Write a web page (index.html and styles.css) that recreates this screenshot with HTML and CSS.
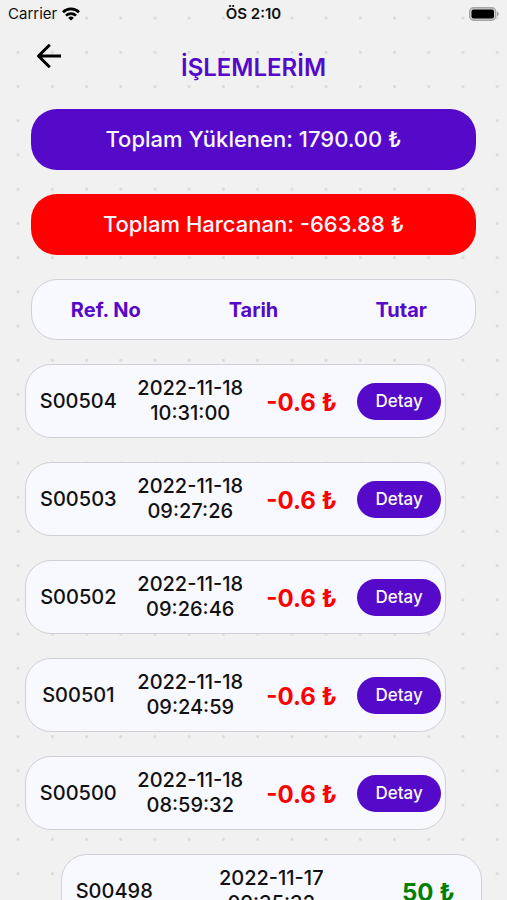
FILE: index.html
```
<!DOCTYPE html>
<html lang="tr">
<head>
    <meta charset="UTF-8">
    <meta name="viewport" content="width=device-width, initial-scale=1">
    <title>İşlemlerim</title>
    <link rel="stylesheet" href="styles.css">
</head>
<body>
    <div class="screen">
        <div class="status-bar">
            <div class="carrier">
                <span>Carrier</span>
                <svg width="18" height="14" viewBox="0 0 18 14" fill="none" stroke="#000" stroke-width="2.7">
                    <path d="M1 5.2a11.4 11.4 0 0 1 16 0"/>
                    <path d="M4 8.6a7.2 7.2 0 0 1 10 0"/>
                    <path d="M9 13.5L6.2 10.9a4 4 0 0 1 5.6 0z" fill="#000" stroke="none"/>
                </svg>
            </div>
            <div class="time">ÖS 2:10</div>
            <div class="battery">
                <svg width="30" height="14" viewBox="0 0 30 14">
                    <rect x="0.7" y="0.7" width="26" height="12.6" rx="4" fill="#d4d4d4" stroke="#a5a5a5" stroke-width="1.4"/>
                    <rect x="2.5" y="2.5" width="22.5" height="9" rx="2" fill="#000"/>
                    <path d="M28 4.5c2.4 1 2.4 4 0 5z" fill="#a5a5a5"/>
                </svg>
            </div>
        </div>

        <header>
            <button class="back" aria-label="Geri">
                <svg width="26" height="26" viewBox="0 0 26 26" fill="none" stroke="#000" stroke-width="3" stroke-linejoin="round">
                    <path d="M25 13H3M13.8 1.8L2.5 13l11.3 11.2"/>
                </svg>
            </button>
            <h1>İŞLEMLERİM</h1>
        </header>

        <main>
            <div class="total loaded">Toplam Yüklenen: 1790.00 ₺</div>
            <div class="total spent">Toplam Harcanan: -663.88 ₺</div>

            <table>
                <thead>
                    <tr>
                        <th>Ref. No</th>
                        <th>Tarih</th>
                        <th>Tutar</th>
                    </tr>
                </thead>
                <tbody>
                    <tr class="expense">
                        <td>S00504</td>
                        <td>2022-11-18<br>10:31:00</td>
                        <td class="amount">-0.6 ₺</td>
                        <td><button class="detail">Detay</button></td>
                    </tr>
                    <tr class="expense">
                        <td>S00503</td>
                        <td>2022-11-18<br>09:27:26</td>
                        <td class="amount">-0.6 ₺</td>
                        <td><button class="detail">Detay</button></td>
                    </tr>
                    <tr class="expense">
                        <td>S00502</td>
                        <td>2022-11-18<br>09:26:46</td>
                        <td class="amount">-0.6 ₺</td>
                        <td><button class="detail">Detay</button></td>
                    </tr>
                    <tr class="expense">
                        <td>S00501</td>
                        <td>2022-11-18<br>09:24:59</td>
                        <td class="amount">-0.6 ₺</td>
                        <td><button class="detail">Detay</button></td>
                    </tr>
                    <tr class="expense">
                        <td>S00500</td>
                        <td>2022-11-18<br>08:59:32</td>
                        <td class="amount">-0.6 ₺</td>
                        <td><button class="detail">Detay</button></td>
                    </tr>
                    <tr class="income">
                        <td>S00498</td>
                        <td>2022-11-17<br>09:35:32</td>
                        <td class="amount">50 ₺</td>
                    </tr>
                </tbody>
            </table>
        </main>
    </div>
</body>
</html>
```

FILE: styles.css
```
* { box-sizing: border-box; }
body { margin: 0; font-family: Inter, "Liberation Sans", sans-serif; color: #111; background-color: #f1f1f1; }

.screen {
    height: 100vh;
    overflow-y: auto;
    scrollbar-width: none;
    background-image: radial-gradient(circle, #dadada 1px, transparent 2px);
    background-size: 6.75vw 6.75vw;
    background-position: 1px 1px;
}

.status-bar { display: grid; grid-template-columns: 1fr auto 1fr; align-items: center; height: 27px; padding: 0 8px; font-size: 15px; }
.carrier { display: flex; align-items: center; gap: 5px; }
.time { font-weight: 600; }
.battery { display: flex; justify-content: flex-end; }

header { display: grid; grid-template-columns: 1fr auto 1fr; height: 82px; padding: 0 36px; }
.back { justify-self: start; align-self: start; margin-top: 16px; padding: 0; border: none; background: none; cursor: pointer; }
.back svg { display: block; }
h1 { margin: 26px 0 0; font-size: 24px; line-height: 30px; font-weight: 600; color: #5509c9; }

.total { height: 61px; margin: 0 31px 24px; border-radius: 26px; font-size: 22px; line-height: 60px; font-weight: 500; text-align: center; color: #f8f8ff; }
.loaded { background-color: #5509c9; }
.spent { background-color: #ff0000; }

table, thead, tbody { display: block; }
tr { display: grid; align-items: center; margin-bottom: 24px; border: 1px solid #d0d0d6; border-radius: 26px; background-color: #f8f8ff; }
th, td { padding: 0; text-align: center; }

thead tr { grid-template-columns: repeat(3, 1fr); height: 61px; margin: 0 31px 24px; }
th { font-size: 20px; font-weight: 700; color: #5509c9; }

tbody tr { width: 83%; height: 74px; }
td { font-size: 20px; line-height: 25px; font-weight: 500; }
.amount { padding-top: 2px; font-size: 24px; font-weight: 700; }
.expense { grid-template-columns: 104fr 120fr 103fr 92fr; margin-left: 5%; }
.expense .amount { color: #ff0000; }
.income { grid-template-columns: 1fr 2fr 1fr; margin-left: auto; margin-right: 5%; }
.income .amount { color: #008000; }

.detail { width: 84px; height: 37px; padding: 0; border: none; border-radius: 19px; font-family: inherit; font-size: 17px; font-weight: 500; color: #f8f8ff; background-color: #5509c9; cursor: pointer; vertical-align: middle; }
```
